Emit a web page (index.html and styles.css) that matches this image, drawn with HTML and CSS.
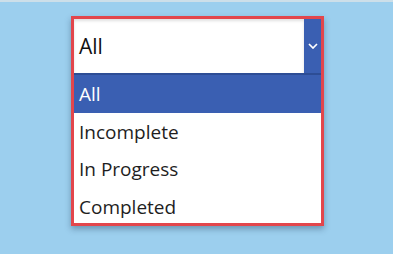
FILE: index.html
```html
<!DOCTYPE html>
<html>
<head>
<meta charset="utf-8">
<link rel="stylesheet" href="styles.css">
</head>
<body>
<div class="topstrip"></div>
<div class="stage">
  <div class="dropdown">
    <div class="field">
      <div class="value">All</div>
      <div class="button">
        <svg width="10" height="6" viewBox="0 0 10 6"><path d="M1 1 L5 5 L9 1" fill="none" stroke="#ffffff" stroke-width="1.7"/></svg>
      </div>
    </div>
    <ul class="list">
      <li class="item selected">All</li>
      <li class="item">Incomplete</li>
      <li class="item">In Progress</li>
      <li class="item">Completed</li>
    </ul>
  </div>
</div>
</body>
</html>
```
FILE: styles.css
```css
html, body {
  margin: 0;
  padding: 0;
}
body {
  background: #9ccfee;
  width: 393px;
  height: 254px;
  overflow: hidden;
  font-family: "Open Sans", "Noto Sans", sans-serif;
}
.topstrip {
  height: 2px;
  background: #cddfe9;
}
.stage {
  padding: 14px 0 0 71px;
}
.dropdown {
  width: 247px;
  height: 204px;
  border: 3px solid #e2464c;
  background: #ffffff;
  box-shadow: 0 3px 6px rgba(20, 40, 70, 0.35);
  overflow: hidden;
}
.field {
  display: flex;
  height: 54px;
  border-bottom: 2px solid #2d4d95;
}
.value {
  flex: 1;
  display: flex;
  align-items: center;
  padding-left: 5px;
  font-size: 21px;
  color: #111111;
  box-shadow: inset 0 2px 3px rgba(0, 0, 0, 0.12);
}
.button {
  width: 17px;
  background: #3a5fb2;
  display: flex;
  align-items: center;
  justify-content: center;
}
.list {
  list-style: none;
  margin: 0;
  padding: 0;
}
.item {
  box-sizing: border-box;
  height: 37.5px;
  line-height: 37.5px;
  padding: 1px 0 0 5px;
  font-size: 19px;
  color: #1e1e1e;
}
.item.selected {
  background: #3a5fb2;
  color: #ffffff;
}
```
